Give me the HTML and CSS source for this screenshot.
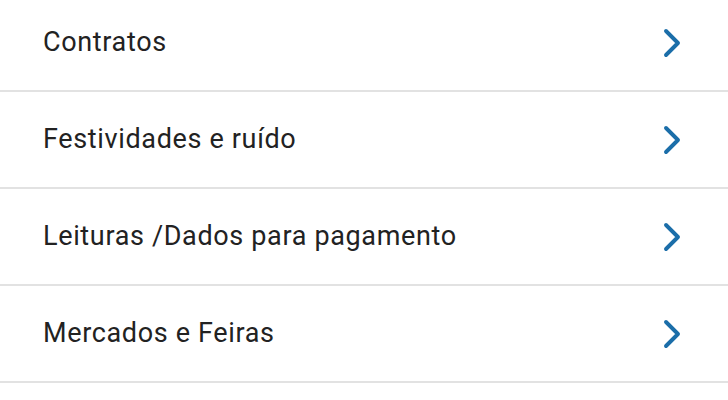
FILE: index.html
```html
<!DOCTYPE html>
<html lang="pt">
<head>
<meta charset="utf-8">
<link rel="stylesheet" href="styles.css">
</head>
<body>
<ul class="menu">
  <li class="item"><span class="label">Contratos</span><svg class="chev" viewBox="0 0 20 30"><path d="M4 3 L16 15 L4 27"/></svg></li>
  <li class="item"><span class="label">Festividades e ruído</span><svg class="chev" viewBox="0 0 20 30"><path d="M4 3 L16 15 L4 27"/></svg></li>
  <li class="item"><span class="label">Leituras /Dados para pagamento</span><svg class="chev" viewBox="0 0 20 30"><path d="M4 3 L16 15 L4 27"/></svg></li>
  <li class="item"><span class="label">Mercados e Feiras</span><svg class="chev" viewBox="0 0 20 30"><path d="M4 3 L16 15 L4 27"/></svg></li>
</ul>
</body>
</html>
```
FILE: styles.css
```css
html, body {
  margin: 0;
  padding: 0;
  background: #ffffff;
}
.menu {
  list-style: none;
  margin: -5px 0 0 0;
  padding: 0;
}
.item {
  display: flex;
  align-items: center;
  justify-content: space-between;
  height: 95px;
  padding: 0 46px 0 43px;
  border-bottom: 2px solid #e2e2e2;
}
.label {
  font-family: Roboto, "Liberation Sans", sans-serif;
  font-size: 27px;
  color: #222222;
  letter-spacing: 0.65px;
  margin-top: -2px;
}
.chev {
  width: 20px;
  height: 30px;
  fill: none;
  stroke: #1b6ea9;
  stroke-width: 3.9;
  stroke-linecap: round;
  stroke-linejoin: round;
}
```
